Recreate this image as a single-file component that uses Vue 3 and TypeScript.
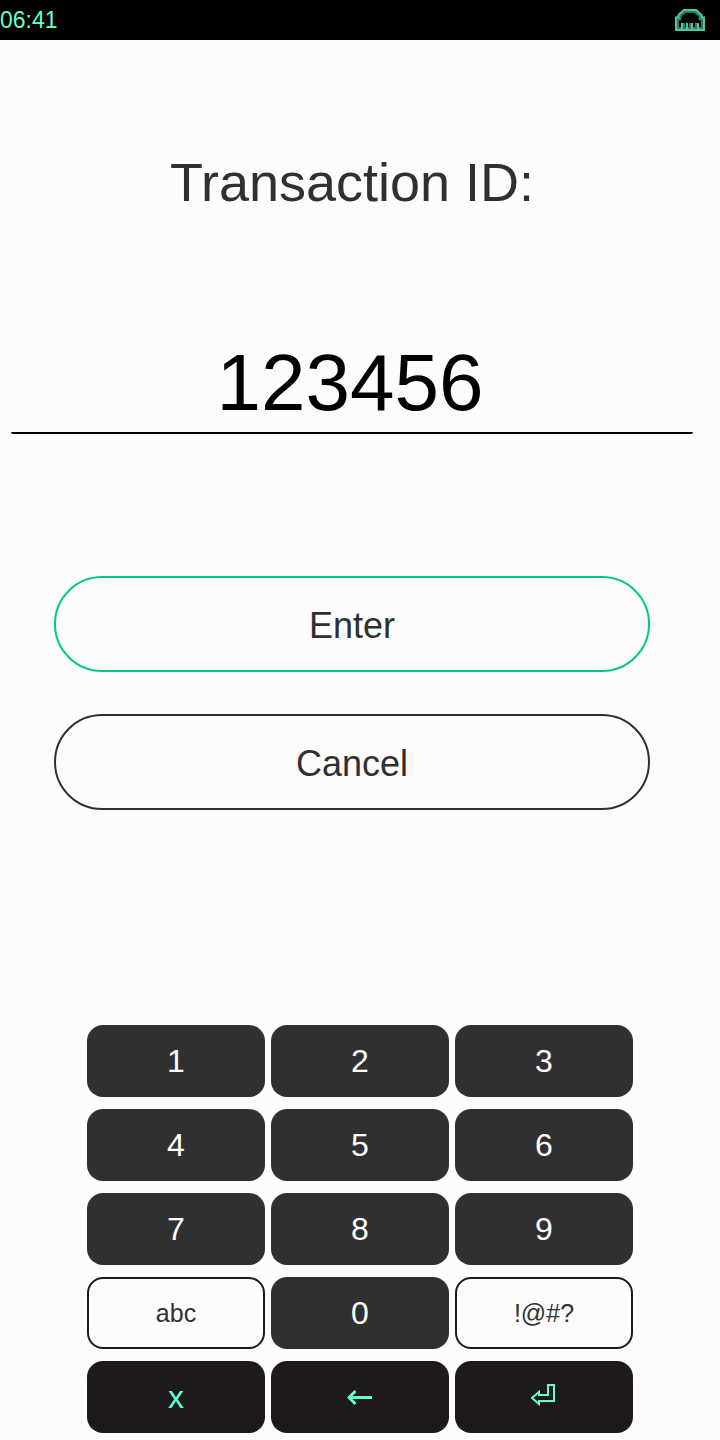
<script setup lang="ts">
import { ref } from 'vue'

const transactionId = ref<string>('123456')
const digits: string[] = ['1', '2', '3', '4', '5', '6', '7', '8', '9']

function press(digit: string): void {
  transactionId.value += digit
}

function erase(): void {
  transactionId.value = transactionId.value.slice(0, -1)
}

function clear(): void {
  transactionId.value = ''
}
</script>

<template>
  <div class="screen">
    <header class="status">
      <time>06:41</time>
      <svg class="network" viewBox="0 0 30 22" role="img" aria-label="Ethernet" fill="none">
        <path stroke="#2c7a64" stroke-width="4" d="M2 20V9.500H4.500V6.500L10 2H20L25.500 6.500V9.500H28V20Z" />
        <path stroke="#52c4a2" stroke-width="2" d="M1 21V8.500H3.500V6L9 1H21L26.500 6V8.500H29V21Z" />
        <path stroke="#2c7a64" stroke-width="2" d="M9 14v6M15 14v6M21 14v6" />
        <path stroke="#52c4a2" stroke-width="2" d="M7 14v6M12 14v6M17 14v6M23 14v6" />
      </svg>
    </header>

    <main class="form">
      <label class="title" for="transaction">Transaction ID:</label>
      <input id="transaction" v-model="transactionId" class="field" type="text" inputmode="none" />
      <div class="actions">
        <button class="action primary" type="button">Enter</button>
        <button class="action" type="button">Cancel</button>
      </div>
    </main>

    <section class="keypad" aria-label="Keypad">
      <button v-for="digit in digits" :key="digit" class="key" type="button" @click="press(digit)">{{ digit }}</button>
      <button class="key outline" type="button">abc</button>
      <button class="key" type="button" @click="press('0')">0</button>
      <button class="key outline" type="button">!@#?</button>
      <button class="key dark" type="button" @click="clear">x</button>
      <button class="key dark" type="button" aria-label="Backspace" @click="erase">
        <svg class="arrow" viewBox="0 0 26 16" fill="none" stroke="currentColor" stroke-width="3">
          <path d="M25 8.500H3M8.500 2L2 8.500L8.500 15" />
        </svg>
      </button>
      <button class="key dark" type="button" aria-label="Return">
        <svg class="return" viewBox="0 0 26 22" fill="none" stroke="currentColor" stroke-width="2">
          <path d="M17 1h6v16H8v3L1 14l7-6v3h9z" />
        </svg>
      </button>
    </section>
  </div>
</template>

<style>
body {
  background: #fcfcfc;
}
</style>

<style scoped>
.screen {
  display: flex;
  flex-direction: column;
  min-height: 100vh;
  background: #fcfcfc;
  color: #303030;
  font-family: "Liberation Sans", Arial, sans-serif;
}

button,
input {
  box-sizing: border-box;
  margin: 0;
  padding: 0;
  font: inherit;
  color: inherit;
}

.status {
  display: flex;
  align-items: center;
  justify-content: space-between;
  height: 40px;
  padding-right: 15px;
  background: #000;
  color: #66ffcc;
  font-size: 23px;
  line-height: 40px;
}

.network {
  display: block;
  width: 30px;
  height: 22px;
}

.form {
  display: flex;
  flex-direction: column;
  padding: 112px 27px 0 11px;
}

.title {
  font-size: 54px;
  line-height: 60px;
  text-align: center;
}

.field {
  width: 100%;
  height: 100px;
  margin-top: 122px;
  padding-right: 4px;
  border: 0;
  border-bottom: 2px solid #000;
  border-radius: 2px;
  outline: 0;
  background: transparent;
  color: #000;
  font-size: 80px;
  text-align: center;
}

.actions {
  display: flex;
  flex-direction: column;
  gap: 42px;
  padding: 142px 43px 0;
}

.action {
  height: 96px;
  padding-top: 4px;
  border: 2px solid #303030;
  border-radius: 48px;
  background: transparent;
  font-size: 36px;
}

.primary {
  border-color: #00c88c;
}

.keypad {
  display: grid;
  grid-template-columns: repeat(3, 1fr);
  gap: 12px 6px;
  margin-top: auto;
  padding: 0 87px 7px;
}

.key {
  display: flex;
  align-items: center;
  justify-content: center;
  height: 72px;
  border: 0;
  border-radius: 16px;
  background: #303030;
  color: #fff;
  font-size: 32px;
}

.outline {
  border: 2px solid #1e191d;
  background: transparent;
  color: #303030;
  font-size: 25px;
}

.dark {
  background: #1e191d;
  color: #66ffcc;
}

.arrow {
  width: 26px;
  height: 16px;
}

.return {
  width: 26px;
  height: 22px;
  margin-bottom: 4px;
}
</style>
